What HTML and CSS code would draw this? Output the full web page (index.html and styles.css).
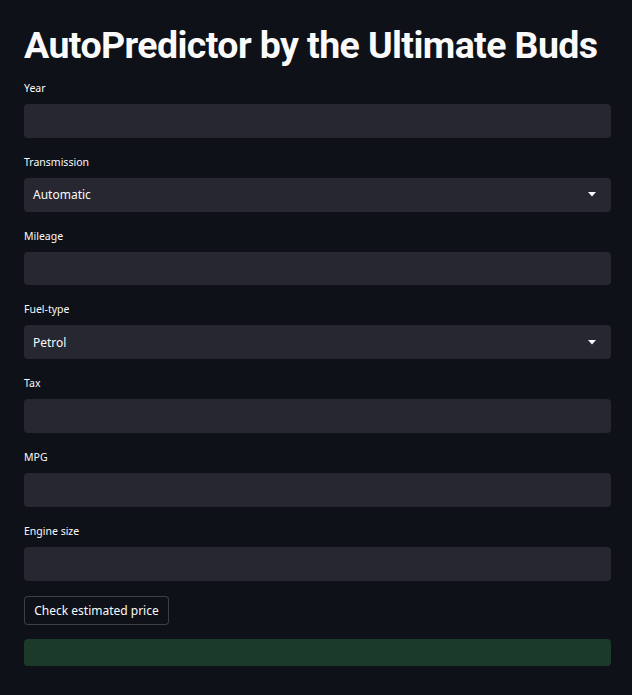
FILE: index.html
```html
<!DOCTYPE html>
<html>
<head>
<meta charset="utf-8">
<link rel="stylesheet" href="styles.css">
</head>
<body>
<main class="app">
  <h1 class="title">AutoPredictor by the Ultimate Buds</h1>
  <div class="field">
    <label class="label">Year</label>
    <div class="input"></div>
  </div>
  <div class="field">
    <label class="label">Transmission</label>
    <div class="input select"><span class="value">Automatic</span><svg class="caret" width="8" height="5" viewBox="0 0 8 5"><path d="M0 0H8L4 4.5Z" fill="#fafafa"/></svg></div>
  </div>
  <div class="field">
    <label class="label">Mileage</label>
    <div class="input"></div>
  </div>
  <div class="field">
    <label class="label">Fuel-type</label>
    <div class="input select"><span class="value">Petrol</span><svg class="caret" width="8" height="5" viewBox="0 0 8 5"><path d="M0 0H8L4 4.5Z" fill="#fafafa"/></svg></div>
  </div>
  <div class="field">
    <label class="label">Tax</label>
    <div class="input"></div>
  </div>
  <div class="field">
    <label class="label">MPG</label>
    <div class="input"></div>
  </div>
  <div class="field">
    <label class="label">Engine size</label>
    <div class="input"></div>
  </div>
  <button class="btn">Check estimated price</button>
  <div class="success"></div>
</main>
</body>
</html>
```
FILE: styles.css
```css
* { box-sizing: border-box; }
html, body { margin: 0; padding: 0; background: #0e1117; }
body { width: 632px; height: 695px; overflow: hidden; color: #fafafa; font-family: "Noto Sans", "Open Sans", sans-serif; }
.app { display: flex; flex-direction: column; padding: 24px 21px 0 24px; }
.title {
  margin: -1px 0 13px 0;
  font-family: Roboto, "Noto Sans", sans-serif;
  font-weight: 700;
  font-size: 37.5px;
  line-height: 44px;
  letter-spacing: -0.6px;
  white-space: nowrap;
  color: #fafafa;
}
.field { display: flex; flex-direction: column; margin-bottom: 16px; }
.label { font-size: 10.5px; line-height: 16px; margin-bottom: 8px; color: #fafafa; }
.input { height: 33.8px; background: #262730; border-radius: 4px; }
.select { display: flex; align-items: center; justify-content: space-between; padding: 0 15px 0 9px; }
.value { font-size: 12px; color: #fafafa; }
.caret { display: block; }
.btn {
  align-self: flex-start;
  width: 145px; height: 29px;
  margin-top: -1px;
  background: #0e1117;
  border: 1px solid rgba(250,250,250,0.2);
  border-radius: 4px;
  color: #fafafa;
  font-family: "Noto Sans", sans-serif;
  font-size: 12px;
  padding: 0;
}
.success { height: 27px; margin-top: 14px; background: #1b3a29; border-radius: 4px; }
```
